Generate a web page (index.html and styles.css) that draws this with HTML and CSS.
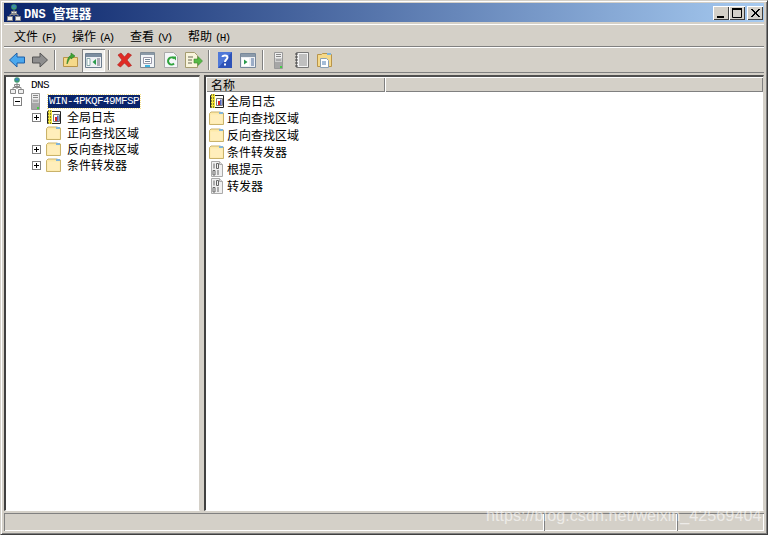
FILE: index.html
```html
<!DOCTYPE html>
<html lang="zh-CN">
<head>
  <meta charset="UTF-8">
  <title>DNS 管理器</title>
  <link rel="stylesheet" href="styles.css">
</head>
<body>
  <svg class="defs" width="0" height="0">
    <symbol id="folder" viewBox="0 0 16 16">
      <path d="M.5 14.500V3.500L2 2h9.500l1 1h2v11.500z" fill="#fde9a8" stroke="#c9b26a"/>
      <path d="M10 2h4v2h-4z" fill="#7fb4dc"/>
      <path d="M1.500 4.500h12v9h-12z" fill="#ffeebb"/>
    </symbol>
    <symbol id="journal" viewBox="0 0 16 16">
      <path d="M1.500 2.500h13v12h-13z" fill="#fff" stroke="#222"/>
      <path d="M2 1h4v14H2z" fill="#f6e83c"/>
      <path d="M2 2h4M2 5h4M2 8h4M2 11h4M2 14h4" stroke="#222" stroke-dasharray="1 1"/>
      <path d="M7.500 5.500h6v7h-6z" fill="#fff" stroke="#777"/>
      <path d="M9 8h2v4H9z" fill="#d22"/>
      <path d="M11.200 6.500h1.300v5.500h-1.300z" fill="#2340b0"/>
    </symbol>
    <symbol id="binfile" viewBox="0 0 16 16">
      <path d="M2.500 .5h8l3 3v12h-11z" fill="#f0f0f0" stroke="#aaa"/>
      <path d="M10.500 .5v3h3" fill="#ddd" stroke="#aaa"/>
      <path d="M5 2.500v5M7.500 2.500h2v5h-2zM4 9.500h2v4.500H4zM9 9v5" fill="none" stroke="#666"/>
    </symbol>
    <symbol id="server" viewBox="0 0 10 17">
      <path d="M.5 .5h8v16h-8z" fill="#cfcfcf" stroke="#999"/>
      <path d="M1 1h7v5H1z" fill="#eee"/>
      <path d="M2 2.500h5M2 4.500h5M2 8h5" stroke="#888"/>
      <path d="M1 10h7v6H1z" fill="#a6a6a6"/>
      <path d="M6 14h2v2H6z" fill="#4c4"/>
    </symbol>
    <symbol id="dnsroot" viewBox="0 0 14 17">
      <circle cx="7" cy="3" r="2.800" fill="#3f9a70"/>
      <path d="M5.500 1.500h3v2h-3z" fill="#3a7fd0"/>
      <path d="M4.500 7.500h5v2h-5zM.5 12.500h5v4h-5zM8.500 12.500h5v4h-5z" fill="#eee" stroke="#888"/>
      <path d="M7 6v6M3 12v-1.500h8V12" fill="none" stroke="#888"/>
    </symbol>
  </svg>

  <div class="window">
    <div class="titlebar">
      <svg class="title-icon" width="14" height="17"><use href="#dnsroot"/></svg>
      <span class="title-text"><span class="title-latin">DNS</span>管理器</span>
      <div class="caption-btns">
        <button class="cap-btn"><svg width="16" height="14"><path d="M4 10h7v2H4z" fill="#000"/></svg></button>
        <button class="cap-btn"><svg width="16" height="14"><path d="M3.500 2.500h9v9h-9z" fill="none" stroke="#000"/><path d="M3 2h10v2H3z"/></svg></button>
        <button class="cap-btn cap-close"><svg width="16" height="14"><path d="M4 3l8 8M5 3l8 8M12 3l-8 8M13 3l-8 8" stroke="#000" fill="none"/></svg></button>
      </div>
    </div>

    <div class="menubar">
      <div class="menu-item">文件<span class="key">(F)</span></div>
      <div class="menu-item">操作<span class="key">(A)</span></div>
      <div class="menu-item">查看<span class="key">(V)</span></div>
      <div class="menu-item">帮助<span class="key">(H)</span></div>
    </div>

    <div class="toolbar">
      <div class="tool"><svg width="16" height="16"><path d="M8 1L.5 8 8 15v-4h7.500V5H8z" fill="#4aa8ee" stroke="#1d5fa8"/></svg></div>
      <div class="tool"><svg width="16" height="16"><path d="M8 1l7.500 7L8 15v-4H.5V5H8z" fill="#8e8e8e" stroke="#555"/></svg></div>
      <div class="sep"></div>
      <div class="tool">
        <svg width="15" height="16">
          <path d="M.5 14.500V5.500H14.500v9z" fill="#f5d98a" stroke="#b8944a"/>
          <path d="M4 12C4 7 6 4 8 3.500V1l4 3-4 3V5.500C6.500 6 5.500 9 4 12z" fill="#3fa535" stroke="#2a7a25" stroke-width=".6"/>
        </svg>
      </div>
      <div class="tool tool-on">
        <svg width="17" height="15">
          <path d="M.5 .5h16v14H.5z" fill="#eef0f4" stroke="#6d7d8e"/>
          <path d="M1 1h15v3H1z" fill="#7d8ea0"/>
          <path d="M2 5.500h3v7H2z" fill="#fff" stroke="#8aa"/>
          <path d="M11 6l-3.500 3 3.500 3z" fill="#2a9a4c"/>
          <path d="M12 6h3M12 8h3M12 10h3M12 12h3" stroke="#667"/>
        </svg>
      </div>
      <div class="sep"></div>
      <div class="tool"><svg width="17" height="16"><path d="M2 3l3-2 3.500 4L12 1l3.500 2L11 8l4.500 5.500L12.500 15 8.500 11l-4 4-3-2L6 8z" fill="#e02a24" stroke="#a5201c" stroke-width=".6"/></svg></div>
      <div class="tool">
        <svg width="15" height="16">
          <path d="M.5 .5h14v15H.5z" fill="#f2f5f8" stroke="#7f8b96"/>
          <path d="M1 1h13v2H1z" fill="#8b9aa8"/>
          <path d="M3.500 5.500h8v6h-8z" fill="#fff" stroke="#99a"/>
          <path d="M5 7.500h5M5 9.500h5" stroke="#789"/>
          <path d="M5 13h5v2H5z" fill="#3fb4e0"/>
        </svg>
      </div>
      <div class="tool">
        <svg width="14" height="16">
          <path d="M.5 .5h9l4 4v11H.5z" fill="#f4f6f8" stroke="#aaa"/>
          <path d="M10 11.500a3.500 3.500 0 1 1 0-5" fill="none" stroke="#2fa33c" stroke-width="2"/>
          <path d="M8 4.500h4v4z" fill="#2fa33c"/>
        </svg>
      </div>
      <div class="tool">
        <svg width="18" height="16">
          <path d="M.5 .5h9l3 3v12H.5z" fill="#f8f4dc" stroke="#a59c70"/>
          <path d="M3 5h5M3 8h4M3 11h4" stroke="#665"/>
          <path d="M9 7h4V4.500L17.500 9 13 13.500V11H9z" fill="#57b947" stroke="#3a8a30" stroke-width=".6"/>
        </svg>
      </div>
      <div class="sep"></div>
      <div class="tool">
        <svg width="14" height="16">
          <path d="M0 0h14v16H0z" fill="#2e52b8"/>
          <path d="M0 0h14l-14 16z" fill="#4f78d8"/>
          <path d="M4.500 5C4.500 3 9.500 3 9.500 5.500 9.500 7.500 7 7.500 7 10" fill="none" stroke="#fff" stroke-width="2"/>
          <path d="M6 11.500h2v2H6z" fill="#fff"/>
        </svg>
      </div>
      <div class="tool">
        <svg width="16" height="15">
          <path d="M.5 .5h15v14H.5z" fill="#eef0f4" stroke="#78889a"/>
          <path d="M1 1h14v3H1z" fill="#8b9aaa"/>
          <path d="M2 5h7v8H2z" fill="#fff"/>
          <path d="M4 6.500l3.500 2.500L4 11.500z" fill="#2a9a4c"/>
          <path d="M11 6h3M11 8h3M11 10h3M11 12h3" stroke="#4a6a9a"/>
        </svg>
      </div>
      <div class="sep"></div>
      <div class="tool"><svg width="10" height="17"><use href="#server"/></svg></div>
      <div class="tool">
        <svg width="14" height="16">
          <path d="M1.500 .5h12v15h-12z" fill="#f4f4f4" stroke="#777"/>
          <path d="M0 2h3M0 5h3M0 8h3M0 11h3M0 14h3" stroke="#444"/>
          <path d="M4 3h8M4 5h8M4 7h8M4 9h8M4 11h8M4 13h8" stroke="#8a8a8a"/>
        </svg>
      </div>
      <div class="tool">
        <svg width="15" height="16">
          <path d="M.5 14.500V2.500h4l1-1h8l1 1v12z" fill="#f5d98a" stroke="#b8944a"/>
          <path d="M10 1h4v2h-4z" fill="#7fb4dc"/>
          <path d="M3.500 6.500h6l2 2v7h-8z" fill="#fff" stroke="#8aa0b4"/>
          <path d="M5 10h4M5 12h4" stroke="#4a7ab0"/>
        </svg>
      </div>
    </div>

    <div class="panes">
      <div class="pane tree">
        <div class="tree-row">
          <span class="slot slot-root"><svg width="14" height="17"><use href="#dnsroot"/></svg></span>
          <span class="latin">DNS</span>
        </div>
        <div class="tree-row">
          <span class="box box-minus"></span>
          <span class="slot slot-server"><svg width="10" height="17"><use href="#server"/></svg></span>
          <span class="latin selected">WIN-4PKQF49MFSP</span>
        </div>
        <div class="tree-row child">
          <span class="box box-plus"></span>
          <svg class="row-icon" width="16" height="16"><use href="#journal"/></svg>
          <span class="row-text">全局日志</span>
        </div>
        <div class="tree-row child">
          <span class="box box-none"></span>
          <svg class="row-icon" width="16" height="16"><use href="#folder"/></svg>
          <span class="row-text">正向查找区域</span>
        </div>
        <div class="tree-row child">
          <span class="box box-plus"></span>
          <svg class="row-icon" width="16" height="16"><use href="#folder"/></svg>
          <span class="row-text">反向查找区域</span>
        </div>
        <div class="tree-row child">
          <span class="box box-plus"></span>
          <svg class="row-icon" width="16" height="16"><use href="#folder"/></svg>
          <span class="row-text">条件转发器</span>
        </div>
      </div>

      <div class="pane list">
        <div class="list-head">
          <div class="col col-name">名称</div>
          <div class="col col-rest"></div>
        </div>
        <div class="list-row"><svg width="16" height="16"><use href="#journal"/></svg><span>全局日志</span></div>
        <div class="list-row"><svg width="16" height="16"><use href="#folder"/></svg><span>正向查找区域</span></div>
        <div class="list-row"><svg width="16" height="16"><use href="#folder"/></svg><span>反向查找区域</span></div>
        <div class="list-row"><svg width="16" height="16"><use href="#folder"/></svg><span>条件转发器</span></div>
        <div class="list-row"><svg width="16" height="16"><use href="#binfile"/></svg><span>根提示</span></div>
        <div class="list-row"><svg width="16" height="16"><use href="#binfile"/></svg><span>转发器</span></div>
      </div>
    </div>

    <div class="statusbar">
      <div class="status-cell status-main"></div>
      <div class="status-cell status-mid"></div>
      <div class="status-cell status-end"></div>
    </div>
  </div>

  <div class="watermark">https://blog.csdn.net/weixin_42569404</div>
</body>
</html>
```

FILE: styles.css
```css
body, html {
  margin: 0;
  padding: 0;
  height: 100%;
  width: 100%;
  overflow: hidden;
  font-family: "Noto Sans CJK SC", sans-serif;
  font-size: 12px;
  color: #000;
}
.defs {
  position: absolute;
}
svg {
  display: block;
  flex: none;
}
.window {
  box-sizing: border-box;
  height: 535px;
  display: flex;
  flex-direction: column;
  background: #d4d0c8;
  border-top: 1px solid #d4d0c8;
  border-left: 1px solid #d4d0c8;
  border-right: 1px solid #404040;
  border-bottom: 1px solid #404040;
  padding: 2px 3px 3px 3px;
  box-shadow: inset 1px 1px 0 #fff, inset -1px -1px 0 #808080;
}

/* title bar */
.titlebar {
  height: 19px;
  flex: none;
  display: flex;
  align-items: center;
  padding: 0 1px 0 3px;
  background: linear-gradient(to right, #0a246a, #a6caf0);
  color: #fff;
}
.title-icon {
  margin-right: 3px;
}
.title-text {
  font-weight: bold;
  font-size: 13px;
  white-space: pre;
}
.title-latin {
  font-family: "Liberation Mono", monospace;
  font-size: 12px;
  margin-right: 7px;
}
.caption-btns {
  margin-left: auto;
  display: flex;
}
.cap-btn {
  width: 16px;
  height: 14px;
  padding: 0;
  border: none;
  background: #d4d0c8;
  box-shadow: inset 1px 1px 0 #fff, inset -1px -1px 0 #404040;
}
.cap-close {
  margin-left: 2px;
}

/* menu */
.menubar {
  height: 23px;
  flex: none;
  margin-top: 2px;
  display: flex;
  align-items: center;
  padding-left: 3px;
  border-top: 1px solid #fff;
  border-bottom: 1px solid #808080;
  box-sizing: border-box;
}
.menu-item {
  width: 44px;
  padding: 0 7px;
  white-space: nowrap;
}
.key {
  font-family: "Liberation Mono", monospace;
  font-size: 11px;
  letter-spacing: -1.800px;
  margin-left: 3px;
}

/* toolbar */
.toolbar {
  height: 26px;
  flex: none;
  box-sizing: border-box;
  display: flex;
  align-items: center;
  padding-left: 1px;
  border-top: 1px solid #fff;
  border-bottom: 1px solid #808080;
}
.tool {
  width: 23px;
  height: 23px;
  display: flex;
  align-items: center;
  justify-content: center;
  box-sizing: border-box;
}
.tool-on {
  background: #f2f1ee;
  box-shadow: inset 1px 1px 0 #808080, inset -1px -1px 0 #fff;
}
.sep {
  width: 2px;
  height: 20px;
  margin: 0 3px;
  background: #808080;
  border-right: 1px solid #fff;
  box-sizing: border-box;
}

/* panes */
.panes {
  flex: 1;
  display: flex;
  gap: 4px;
  margin-top: 2px;
  min-height: 0;
}
.pane {
  background: #fff;
  box-sizing: border-box;
  border-top: 2px solid #505050;
  border-left: 2px solid #404040;
  border-right: 1px solid #d4d0c8;
  border-bottom: 1px solid #fff;
}
.tree {
  width: 196px;
  flex: none;
}
.list {
  flex: 1;
}
.tree-row {
  height: 16px;
  display: flex;
  align-items: center;
  white-space: nowrap;
}
.row-text {
  margin-top: -2px;
}
.slot-root {
  margin-left: 4px;
  margin-right: 7px;
}
.latin {
  font-family: "Liberation Mono", monospace;
  font-size: 11px;
  letter-spacing: -0.600px;
}
.box {
  box-sizing: border-box;
  width: 9px;
  height: 9px;
  border: 1px solid #808080;
  margin-left: 7px;
}
.box-plus {
  background: linear-gradient(#000, #000) center / 5px 1px no-repeat, linear-gradient(#000, #000) center / 1px 5px no-repeat;
}
.box-minus {
  background: linear-gradient(#000, #000) center / 5px 1px no-repeat;
}
.box-none {
  border: none;
}
.slot-server {
  margin-left: 9px;
  margin-right: 7px;
}
.selected {
  background: #0a246a;
  color: #fff;
  padding: 0 1px;
  height: 13px;
  line-height: 13px;
  outline: 1px dotted #f5e08a;
}
.child {
  padding-left: 19px;
}
.child .row-icon {
  margin-left: 5px;
  margin-right: 5px;
}
.list-head {
  height: 15px;
  display: flex;
  background: #d4d0c8;
}
.col {
  box-sizing: border-box;
  line-height: 15px;
  padding-left: 5px;
  box-shadow: inset 1px 1px 0 #fff, inset -1px -1px 0 #808080;
}
.col-name {
  width: 179px;
}
.col-rest {
  flex: 1;
}
.list-row {
  height: 17px;
  display: flex;
  align-items: center;
  gap: 2px;
  padding-left: 3px;
  white-space: nowrap;
}

/* status bar */
.statusbar {
  height: 18px;
  flex: none;
  display: flex;
  margin-top: 2px;
}
.status-cell {
  box-sizing: border-box;
  box-shadow: inset 1px 1px 0 #808080, inset -1px -1px 0 #fff;
}
.status-main {
  width: 540px;
}
.status-mid {
  width: 133px;
}
.status-end {
  flex: 1;
}

.watermark {
  position: absolute;
  left: 486px;
  top: 506px;
  font: 16.200px "Liberation Sans", sans-serif;
  color: rgba(255, 255, 255, 0.6);
  white-space: nowrap;
}
```
